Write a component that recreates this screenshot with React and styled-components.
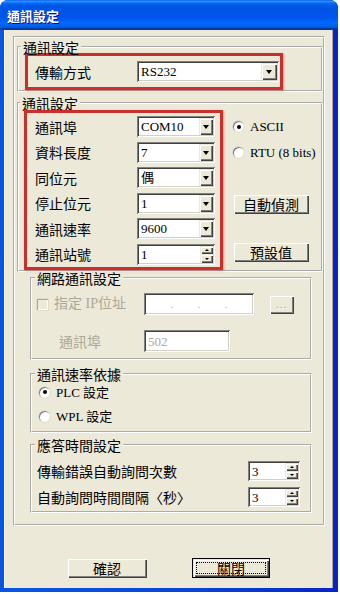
import React from "react";
import styled, { createGlobalStyle } from "styled-components";

const SERIF = `"Liberation Serif", "Noto Sans CJK TC", serif`;
const CJK = `"Noto Sans CJK TC", "Liberation Sans", sans-serif`;

const GlobalStyle = createGlobalStyle`
  html, body {
    margin: 0;
    padding: 0;
    background: #fff;
  }
  body {
    font-family: ${SERIF};
  }
`;

const Window = styled.div`
  width: 338px;
  height: 592px;
  display: flex;
  flex-direction: column;
  background: linear-gradient(90deg, #0a55e4, #0843d8 60%, #0625c8);
  border-radius: 8px 8px 0 0;
  overflow: hidden;
`;

const TitleBar = styled.div`
  height: 30px;
  flex: none;
  display: flex;
  align-items: center;
  padding-left: 7px;
  color: #fff;
  font: bold 13px ${CJK};
  text-shadow: 1px 1px #0f1089;
  background: linear-gradient(
    180deg,
    #0058ee 0%,
    #3593ff 4%,
    #288eff 6%,
    #127dff 8%,
    #036ffc 10%,
    #0262ee 14%,
    #0057e5 20%,
    #0054e3 24%,
    #0055eb 56%,
    #005bf5 66%,
    #026afe 76%,
    #0062ef 86%,
    #0052d6 92%,
    #0040ab 94%,
    #003092 100%
  );
`;

const Client = styled.div`
  flex: 1;
  margin: 0 5px 4px 4px;
  background: #ece9d8;
  border-left: 1px solid #fff;
  border-right: 1px solid #aca899;
  display: flex;
  flex-direction: column;
  padding-top: 6px;
`;

const Frame = styled.div`
  margin-left: 8px;
  width: 312px;
  box-sizing: border-box;
  border: 2px groove #fff;
  padding: 3px 0 11px 2px;
  display: flex;
  flex-direction: column;
`;

const Group = styled.fieldset`
  margin: ${(p) => p.$top || 0}px ${(p) => (p.$inner ? "11px" : "0")} 0
    ${(p) => (p.$inner ? "13px" : "0")};
  padding: ${(p) => p.$pad || "0 0 0 6px"};
  border: 2px groove #fff;
  min-width: 0;
`;

const Legend = styled.legend`
  margin-left: ${(p) => (p.$inner ? "-2px" : "-4px")};
  padding: 0 2px;
  font: 14px ${CJK};
  line-height: 12px;
  color: #000;
`;

const Highlight = styled.div`
  width: ${(p) => p.$w}px;
  height: ${(p) => p.$h}px;
  box-sizing: border-box;
  border: 3px solid #c9302b;
  box-shadow: 1px 1px 2px rgba(190, 70, 70, 0.5);
  padding: ${(p) => p.$pad};
  display: flex;
  flex-direction: column;
  gap: 4.6px;
`;

const Row = styled.div`
  display: flex;
  align-items: center;
  height: ${(p) => p.$h || 21}px;
  margin-top: ${(p) => p.$top || 0}px;
`;

const Label = styled.span`
  width: ${(p) => p.$w}px;
  flex: none;
  font: 14px ${CJK};
  line-height: 16px;
  color: ${(p) => (p.$disabled ? "#aca899" : "#000")};
  padding-left: ${(p) => p.$indent || 0}px;
  box-sizing: border-box;
  white-space: nowrap;
`;

const Field = styled.div`
  width: ${(p) => p.$w}px;
  height: ${(p) => p.$h || 21}px;
  flex: none;
  box-sizing: border-box;
  padding: 2px;
  display: flex;
  align-items: center;
  background: #fff;
  box-shadow: inset 1px 1px #808080, inset -1px -1px #fff, inset 2px 2px #404040,
    inset -2px -2px #d4d0c8;
`;

const Value = styled.span`
  flex: 1;
  padding-left: 2px;
  font: 13px ${SERIF};
  line-height: 15px;
  color: ${(p) => (p.$disabled ? "#aca899" : "#000")};
  white-space: nowrap;
  overflow: hidden;
`;

const raised = `
  background: #ece9d8;
  box-shadow: inset 1px 1px #ece9d8, inset 2px 2px #fff, inset -1px -1px #404040,
    inset -2px -2px #808080;
`;

const DropBtn = styled.span`
  width: ${(p) => p.$w || 16}px;
  align-self: stretch;
  flex: none;
  display: flex;
  align-items: center;
  justify-content: center;
  ${raised}

  &::after {
    content: "";
    border-left: 3.5px solid transparent;
    border-right: 3.5px solid transparent;
    border-top: 4px solid #000;
    margin-top: 1px;
  }
`;

const SpinCol = styled.span`
  width: 13px;
  align-self: stretch;
  flex: none;
  display: flex;
  flex-direction: column;
`;

const SpinBtn = styled.span`
  flex: 1;
  display: flex;
  align-items: center;
  justify-content: center;
  ${raised}

  &::after {
    content: "";
    border-left: 2px solid transparent;
    border-right: 2px solid transparent;
    ${(p) => (p.$up ? "border-bottom: 2px solid #000;" : "border-top: 2px solid #000;")}
  }
`;

const Side = styled.div`
  margin-left: 10px;
  padding-top: 9px;
  display: flex;
  flex-direction: column;
  align-items: flex-start;
`;

const RadioRow = styled.div`
  display: flex;
  align-items: center;
  height: 15px;
  gap: 6px;
  margin-top: ${(p) => p.$top || 0}px;
  margin-left: ${(p) => p.$left || 0}px;
  font: 13px ${SERIF};
  line-height: 15px;
  white-space: nowrap;
`;

const Radio = styled.span`
  width: 11px;
  height: 11px;
  flex: none;
  border-radius: 50%;
  background: #fff;
  box-shadow: inset 1px 1px #808080, 0 0 0 0.5px #c8c5b6;
  display: flex;
  align-items: center;
  justify-content: center;

  &::after {
    content: "";
    width: 4px;
    height: 4px;
    border-radius: 50%;
    background: ${(p) => (p.$on ? "#000" : "transparent")};
  }
`;

const Button = styled.button`
  width: ${(p) => p.$w}px;
  height: 20px;
  margin-top: ${(p) => p.$top || 0}px;
  margin-left: ${(p) => p.$left || 0}px;
  padding: 0;
  border: ${(p) => (p.$default ? "1px solid #000" : "none")};
  ${raised}
  font: 14px ${CJK};
  line-height: 16px;
  color: #000;
  outline: ${(p) => (p.$default ? "1px dotted #000" : "none")};
  outline-offset: -5px;
`;

const SmallBtn = styled.span`
  width: 25px;
  height: 19px;
  margin-left: 15px;
  display: flex;
  align-items: center;
  justify-content: center;
  ${raised}
  color: #aca899;
  font: 11px ${SERIF};
  text-shadow: 1px 1px #fff;
  letter-spacing: 1px;
`;

const Check = styled.span`
  width: 11px;
  height: 11px;
  flex: none;
  margin-right: 6px;
  background: #ece9d8;
  box-shadow: inset 1px 1px #aca899, inset -1px -1px #fff, 0 0 0 0.5px #d0cdbd;
`;

const CheckLabel = styled.div`
  width: 107px;
  flex: none;
  display: flex;
  align-items: center;
  font: 14px ${SERIF};
  line-height: 16px;
  color: #aca899;
  white-space: nowrap;
`;

const IpSeg = styled.span`
  flex: 1;
`;

const IpDot = styled.span`
  color: #aca899;
  font: 10px ${SERIF};
`;

const Footer = styled.div`
  display: flex;
  margin-top: 32px;
`;

const rows = [
  { label: "通訊埠", value: "COM10" },
  { label: "資料長度", value: "7" },
  { label: "同位元", value: "偶" },
  { label: "停止位元", value: "1" },
  { label: "通訊速率", value: "9600" },
];

function Spin({ w, value }) {
  return (
    <Field $w={w} $h={20}>
      <Value>{value}</Value>
      <SpinCol>
        <SpinBtn $up />
        <SpinBtn />
      </SpinCol>
    </Field>
  );
}

export default function App() {
  return (
    <>
      <GlobalStyle />
      <Window>
        <TitleBar>通訊設定</TitleBar>
        <Client>
          <Frame>
            <Group>
              <Legend>通訊設定</Legend>
              <Highlight $w={258} $h={37} $pad="5px 0 0 7px">
                <Row>
                  <Label $w={102}>傳輸方式</Label>
                  <Field $w={142}>
                    <Value>RS232</Value>
                    <DropBtn />
                  </Field>
                </Row>
              </Highlight>
            </Group>

            <Group $top={5} $pad="1px 0 0 5px">
              <Legend>通訊設定</Legend>
              <Row $h={160}>
                <Highlight $w={199} $h={160} $pad="3px 0 2px 8px">
                  {rows.map((r) => (
                    <Row key={r.label}>
                      <Label $w={102}>{r.label}</Label>
                      <Field $w={78}>
                        <Value>{r.value}</Value>
                        <DropBtn $w={14} />
                      </Field>
                    </Row>
                  ))}
                  <Row>
                    <Label $w={102}>通訊站號</Label>
                    <Field $w={78}>
                      <Value>1</Value>
                      <SpinCol>
                        <SpinBtn $up />
                        <SpinBtn />
                      </SpinCol>
                    </Field>
                  </Row>
                </Highlight>
                <Side style={{ alignSelf: "flex-start" }}>
                  <RadioRow>
                    <Radio $on />
                    ASCII
                  </RadioRow>
                  <RadioRow $top={11}>
                    <Radio />
                    RTU (8 bits)
                  </RadioRow>
                  <Button $w={76} $top={34}>
                    自動偵測
                  </Button>
                  <Button $w={76} $top={28}>
                    預設值
                  </Button>
                </Side>
              </Row>
            </Group>

            <Group $inner $pad="9px 5px 6px 5px">
              <Legend $inner>網路通訊設定</Legend>
              <Row $h={22}>
                <CheckLabel>
                  <Check />
                  指定 IP位址
                </CheckLabel>
                <Field $w={110} $h={22}>
                  <IpSeg />
                  <IpDot>.</IpDot>
                  <IpSeg />
                  <IpDot>.</IpDot>
                  <IpSeg />
                  <IpDot>.</IpDot>
                  <IpSeg />
                </Field>
                <SmallBtn>...</SmallBtn>
              </Row>
              <Row $h={22} $top={15}>
                <Label $w={107} $indent={22} $disabled>
                  通訊埠
                </Label>
                <Field $w={86} $h={22}>
                  <Value $disabled>502</Value>
                </Field>
              </Row>
            </Group>

            <Group $inner $top={8} $pad="4px 5px 7px 5px">
              <Legend $inner>通訊速率依據</Legend>
              <RadioRow $left={2} style={{ height: 16 }}>
                <Radio $on />
                PLC 設定
              </RadioRow>
              <RadioRow $left={2} $top={8} style={{ height: 16 }}>
                <Radio />
                WPL 設定
              </RadioRow>
            </Group>

            <Group $inner $top={6} $pad="10px 5px 4px 5px">
              <Legend $inner>應答時間設定</Legend>
              <Row $h={20}>
                <Label $w={211}>傳輸錯誤自動詢問次數</Label>
                <Spin w={52} value="3" />
              </Row>
              <Row $h={20} $top={6}>
                <Label $w={211}>自動詢問時間間隔〈秒〉</Label>
                <Spin w={52} value="3" />
              </Row>
            </Group>
          </Frame>

          <Footer>
            <Button $w={80} $left={62}>
              確認
            </Button>
            <Button $w={78} $left={45} $default>
              關閉
            </Button>
          </Footer>
        </Client>
      </Window>
    </>
  );
}
